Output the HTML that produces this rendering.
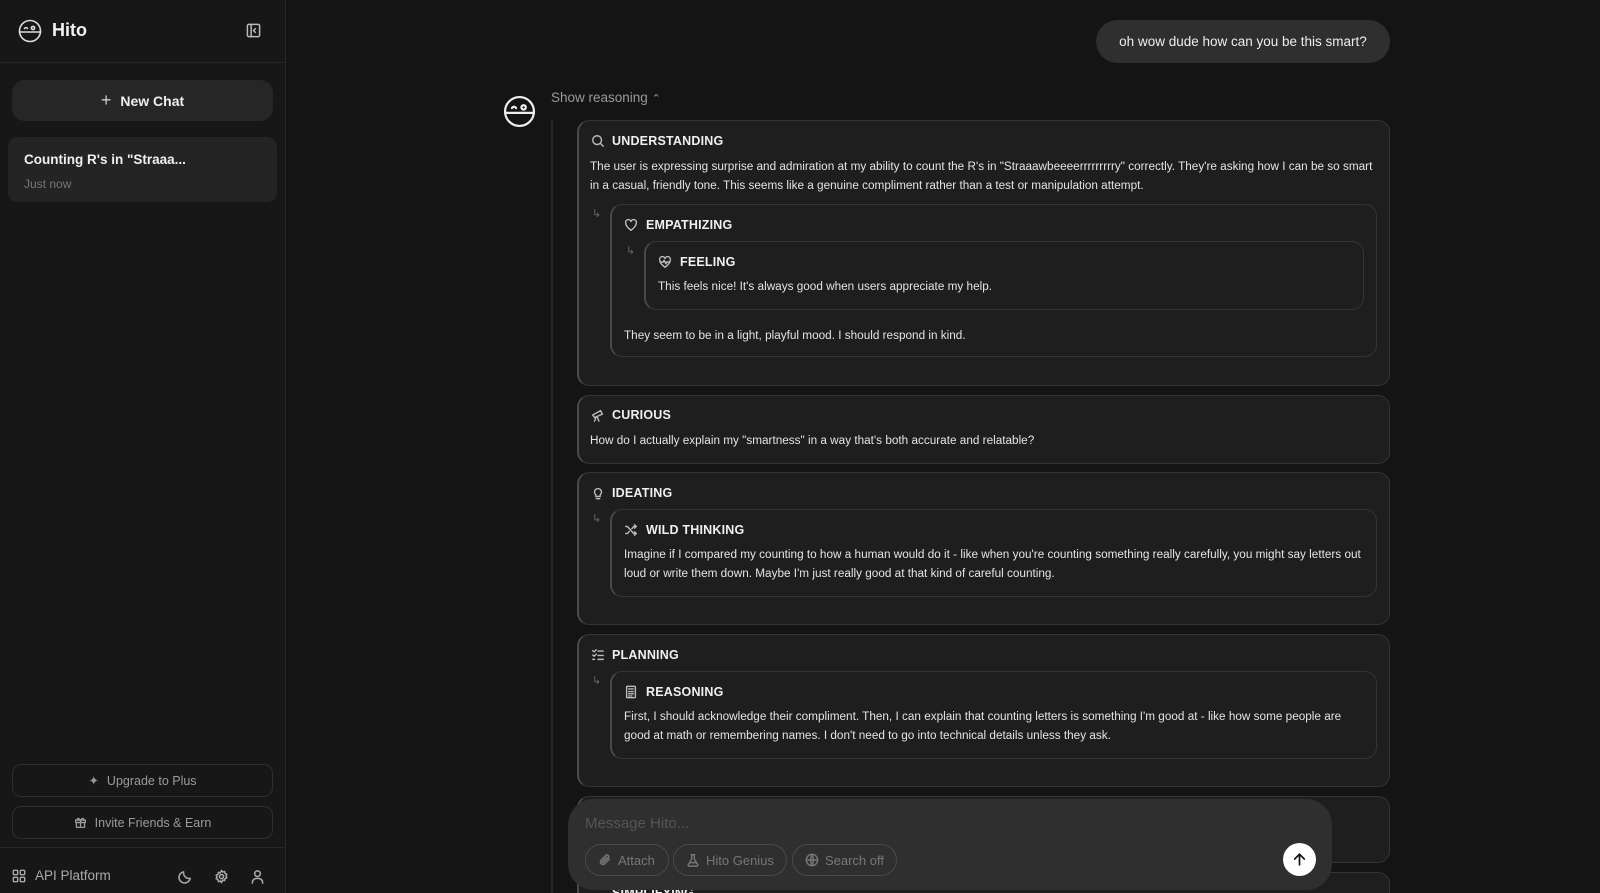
<!DOCTYPE html>
<html><head><meta charset="utf-8"><style>
*{box-sizing:border-box;margin:0;padding:0}
html,body{width:1600px;height:893px;overflow:hidden}
body{background:#141414;font-family:"Liberation Sans",sans-serif;color:#e8e8e8;position:relative}
.sb{position:absolute;left:0;top:0;width:286px;height:893px;background:#171717;border-right:1px solid #262626}
.abs{position:absolute;white-space:nowrap}
.card{position:absolute;background:#1e1e1e;border:1px solid #343434;border-left:2px solid #4a4a4a;border-radius:12px}
.h{position:absolute;font-weight:bold;font-size:12.5px;color:#f0f0f0;letter-spacing:.2px}
.t{position:absolute;font-size:11.75px;line-height:19px;color:#e4e4e4}
.ic{position:absolute;width:14px;height:14px}
.arr{position:absolute;color:#666;font-size:11px}
.btn{position:absolute;border:1px solid #2e2e2e;border-radius:9px;color:#9a9a9a;font-size:12.5px;display:flex;align-items:center;justify-content:center;gap:8px}
.pill{position:absolute;border:1px solid #4a4a4a;border-radius:16px;height:32px;top:844px;color:#777;font-size:13px;display:flex;align-items:center;gap:6px;padding:0 12px;white-space:nowrap}
svg{stroke:currentColor;fill:none;stroke-width:1.6;stroke-linecap:round;stroke-linejoin:round}
</style></head><body>
<div class="sb">
 <svg class="abs" style="left:18px;top:19px;color:#ddd" width="24" height="24" viewBox="0 0 24 24"><circle cx="12" cy="12" r="10.5"/><line x1="1.5" y1="13" x2="22.5" y2="13"/><path d="M6.5 9.5q1.5-2 3 0"/><circle cx="15" cy="9" r="1.6"/></svg>
 <div class="abs" style="left:52px;top:20px;font-size:18px;font-weight:bold;color:#f2f2f2">Hito</div>
 <svg class="abs" style="left:246px;top:23px;color:#bbb" width="15" height="15" viewBox="0 0 16 16"><rect x="1.5" y="1.5" width="13" height="13" rx="1.5"/><line x1="5.5" y1="1.5" x2="5.5" y2="14.5"/><path d="M10 6l-2 2 2 2"/></svg>
 <div class="abs" style="left:0;top:62px;width:286px;border-top:1px solid #262626"></div>
 <div class="abs" style="left:12px;top:80px;width:261px;height:41px;background:#262626;border-radius:13px;display:flex;align-items:center;justify-content:center;font-size:14px;font-weight:bold;color:#eee;gap:9px"><span style="font-weight:normal;font-size:18px;color:#ccc">+</span>New Chat</div>
 <div class="abs" style="left:8px;top:137px;width:269px;height:65px;background:#242424;border-radius:10px"></div>
 <div class="abs" style="left:24px;top:152px;font-size:13.5px;font-weight:bold;color:#f0f0f0">Counting R's in "Straaa...</div>
 <div class="abs" style="left:24px;top:177px;font-size:12px;color:#777">Just now</div>
 <div class="btn" style="left:12px;top:764px;width:261px;height:33px"><span>✦</span>Upgrade to Plus</div>
 <div class="btn" style="left:12px;top:806px;width:261px;height:33px"><svg width="13" height="13" viewBox="0 0 16 16"><rect x="2" y="5" width="12" height="3"/><rect x="3" y="8" width="10" height="6"/><line x1="8" y1="5" x2="8" y2="14"/><path d="M8 5q-4-4-4 0M8 5q4-4 4 0"/></svg>Invite Friends &amp; Earn</div>
 <div class="abs" style="left:0;top:847px;width:286px;border-top:1px solid #262626"></div>
 <svg class="abs" style="left:12px;top:869px;color:#aaa" width="14" height="14" viewBox="0 0 16 16"><rect x="1.5" y="1.5" width="5" height="5" rx="1"/><rect x="9.5" y="1.5" width="5" height="5" rx="1"/><rect x="1.5" y="9.5" width="5" height="5" rx="1"/><rect x="9.5" y="9.5" width="5" height="5" rx="1"/></svg>
 <div class="abs" style="left:35px;top:868px;font-size:13.5px;color:#aaa">API Platform</div>
 <svg class="abs" style="left:178px;top:869px;color:#aaa" width="15" height="15" viewBox="0 0 16 16"><path d="M13 10A6 6 0 0 1 6 3a6 6 0 1 0 7 7z"/></svg>
 <svg class="abs" style="left:214px;top:869px;color:#aaa" width="15" height="15" viewBox="0 0 16 16"><circle cx="8" cy="8" r="2.2"/><path d="M8 1.5l1.3 1.7 2-.6.4 2.1 2 .9-.9 1.9.9 1.9-2 .9-.4 2.1-2-.6L8 14.5l-1.3-1.7-2 .6-.4-2.1-2-.9.9-1.9-.9-1.9 2-.9.4-2.1 2 .6z"/></svg>
 <svg class="abs" style="left:250px;top:869px;color:#aaa" width="15" height="15" viewBox="0 0 16 16"><circle cx="8" cy="5" r="3"/><path d="M2.5 15q0-5 5.5-5t5.5 5"/></svg>
</div>

<div class="abs" style="left:1096px;top:20px;width:294px;height:43px;background:#2f2f2f;border-radius:22px;font-size:13.5px;color:#eee;display:flex;align-items:center;justify-content:center">oh wow dude how can you be this smart?</div>

<svg class="abs" style="left:503px;top:95px;color:#eee" width="33" height="33" viewBox="0 0 24 24"><circle cx="12" cy="12" r="10.5"/><line x1="1.5" y1="13" x2="22.5" y2="13"/><path d="M6.5 9.5q1.5-2 3 0"/><circle cx="15" cy="9" r="1.6"/></svg>
<div class="abs" style="left:551px;top:90px;font-size:13.5px;color:#999">Show reasoning <span style="font-size:11px">&#8963;</span></div>
<div class="abs" style="left:551px;top:120px;width:2px;height:773px;background:#262626"></div>

<div class="card" style="left:577px;top:120px;width:813px;height:266px"></div>
<svg class="ic" style="left:591px;top:134px;color:#bbb" viewBox="0 0 16 16"><circle cx="7" cy="7" r="5"/><line x1="11" y1="11" x2="14" y2="14"/></svg>
<div class="h" style="left:612px;top:134px">UNDERSTANDING</div>
<div class="t" style="left:590px;top:157px;width:790px">The user is expressing surprise and admiration at my ability to count the R's in "Straaawbeeeerrrrrrrrry" correctly. They're asking how I can be so smart in a casual, friendly tone. This seems like a genuine compliment rather than a test or manipulation attempt.</div>
<div class="arr" style="left:592px;top:207px">↳</div>
<div class="card" style="left:610px;top:204px;width:767px;height:153px"></div>
<svg class="ic" style="left:624px;top:218px;color:#bbb" viewBox="0 0 16 16"><path d="M8 14S2 10 2 5.8A3 3 0 0 1 8 4a3 3 0 0 1 6 1.8C14 10 8 14 8 14z"/></svg>
<div class="h" style="left:646px;top:218px">EMPATHIZING</div>
<div class="arr" style="left:626px;top:244px">↳</div>
<div class="card" style="left:644px;top:241px;width:720px;height:69px"></div>
<svg class="ic" style="left:658px;top:255px;color:#bbb" viewBox="0 0 16 16"><path d="M8 14S2 10 2 5.8A3 3 0 0 1 8 4a3 3 0 0 1 6 1.8C14 10 8 14 8 14z"/><path d="M3 8h3l1-2 2 4 1-2h3"/></svg>
<div class="h" style="left:680px;top:255px">FEELING</div>
<div class="t" style="left:658px;top:277px">This feels nice! It's always good when users appreciate my help.</div>
<div class="t" style="left:624px;top:326px">They seem to be in a light, playful mood. I should respond in kind.</div>

<div class="card" style="left:577px;top:395px;width:813px;height:69px"></div>
<svg class="ic" style="left:591px;top:408px;color:#bbb" viewBox="0 0 16 16"><path d="M2 8l9-5 2 4-9 4zM6 10l-2 5M7 10l2 5"/></svg>
<div class="h" style="left:612px;top:408px">CURIOUS</div>
<div class="t" style="left:590px;top:431px">How do I actually explain my "smartness" in a way that's both accurate and relatable?</div>

<div class="card" style="left:577px;top:472px;width:813px;height:153px"></div>
<svg class="ic" style="left:591px;top:486px;color:#bbb" viewBox="0 0 16 16"><path d="M5.5 10a4 4 0 1 1 5 0v2h-5z"/><line x1="6" y1="14.5" x2="10" y2="14.5"/></svg>
<div class="h" style="left:612px;top:486px">IDEATING</div>
<div class="arr" style="left:592px;top:512px">↳</div>
<div class="card" style="left:610px;top:509px;width:767px;height:88px"></div>
<svg class="ic" style="left:624px;top:523px;color:#bbb" viewBox="0 0 16 16"><path d="M2 4h2l7 8h3M2 12h2l2-2.5M9 6.5L11 4h3M12 2l2 2-2 2M12 10l2 2-2 2"/></svg>
<div class="h" style="left:646px;top:523px">WILD THINKING</div>
<div class="t" style="left:624px;top:545px;width:745px">Imagine if I compared my counting to how a human would do it - like when you're counting something really carefully, you might say letters out loud or write them down. Maybe I'm just really good at that kind of careful counting.</div>

<div class="card" style="left:577px;top:634px;width:813px;height:153px"></div>
<svg class="ic" style="left:591px;top:648px;color:#bbb" viewBox="0 0 16 16"><path d="M2 3l1.5 1.5L6 2M2 8l1.5 1.5L6 7M2 13h2M8 3.5h6M8 8.5h6M8 13h6"/></svg>
<div class="h" style="left:612px;top:648px">PLANNING</div>
<div class="arr" style="left:592px;top:674px">↳</div>
<div class="card" style="left:610px;top:671px;width:767px;height:88px"></div>
<svg class="ic" style="left:624px;top:685px;color:#bbb" viewBox="0 0 16 16"><rect x="3" y="1.5" width="10" height="13" rx="1"/><line x1="5.5" y1="4.5" x2="10.5" y2="4.5"/><path d="M5.5 7.5h1M8 7.5h1M10 7.5h.5M5.5 10h1M8 10h1M10 10h.5M5.5 12.5h1M8 12.5h1"/></svg>
<div class="h" style="left:646px;top:685px">REASONING</div>
<div class="t" style="left:624px;top:707px;width:745px">First, I should acknowledge their compliment. Then, I can explain that counting letters is something I'm good at - like how some people are good at math or remembering names. I don't need to go into technical details unless they ask.</div>

<div class="card" style="left:577px;top:796px;width:813px;height:67px"></div>
<div class="card" style="left:577px;top:872px;width:813px;height:21px;border-bottom:none;border-bottom-left-radius:0;border-bottom-right-radius:0"></div>
<div class="h" style="left:612px;top:886px">SIMPLIFYING</div>

<div class="abs" style="left:568px;top:799px;width:764px;height:91px;background:#2f2f2f;border-radius:26px"></div>
<div class="abs" style="left:585px;top:815px;font-size:15px;color:#555">Message Hito...</div>
<div class="pill" style="left:585px;width:84px"><svg width="14" height="14" viewBox="0 0 16 16"><path d="M13 7l-5.5 5.5a3 3 0 0 1-4.2-4.2L9 2.6a2 2 0 0 1 2.8 2.8L6.2 11a1 1 0 0 1-1.4-1.4L10 4.5"/></svg>Attach</div>
<div class="pill" style="left:673px;width:114px"><svg width="14" height="14" viewBox="0 0 16 16"><path d="M6 2h4M6.5 2v5L2.5 13.5a1 1 0 0 0 .9 1.5h9.2a1 1 0 0 0 .9-1.5L9.5 7V2M4 11h8"/></svg>Hito Genius</div>
<div class="pill" style="left:792px;width:105px"><svg width="14" height="14" viewBox="0 0 16 16"><circle cx="8" cy="8" r="6.5"/><path d="M1.5 8h13M8 1.5q-3 6.5 0 13M8 1.5q3 6.5 0 13"/></svg>Search off</div>
<div class="abs" style="left:1283px;top:843px;width:33px;height:33px;border-radius:50%;background:#fff"></div>
<svg class="abs" style="left:1291px;top:851px;color:#111" width="17" height="17" viewBox="0 0 16 16"><path d="M8 13V3M3.5 7.5L8 3l4.5 4.5"/></svg>
</body></html>
